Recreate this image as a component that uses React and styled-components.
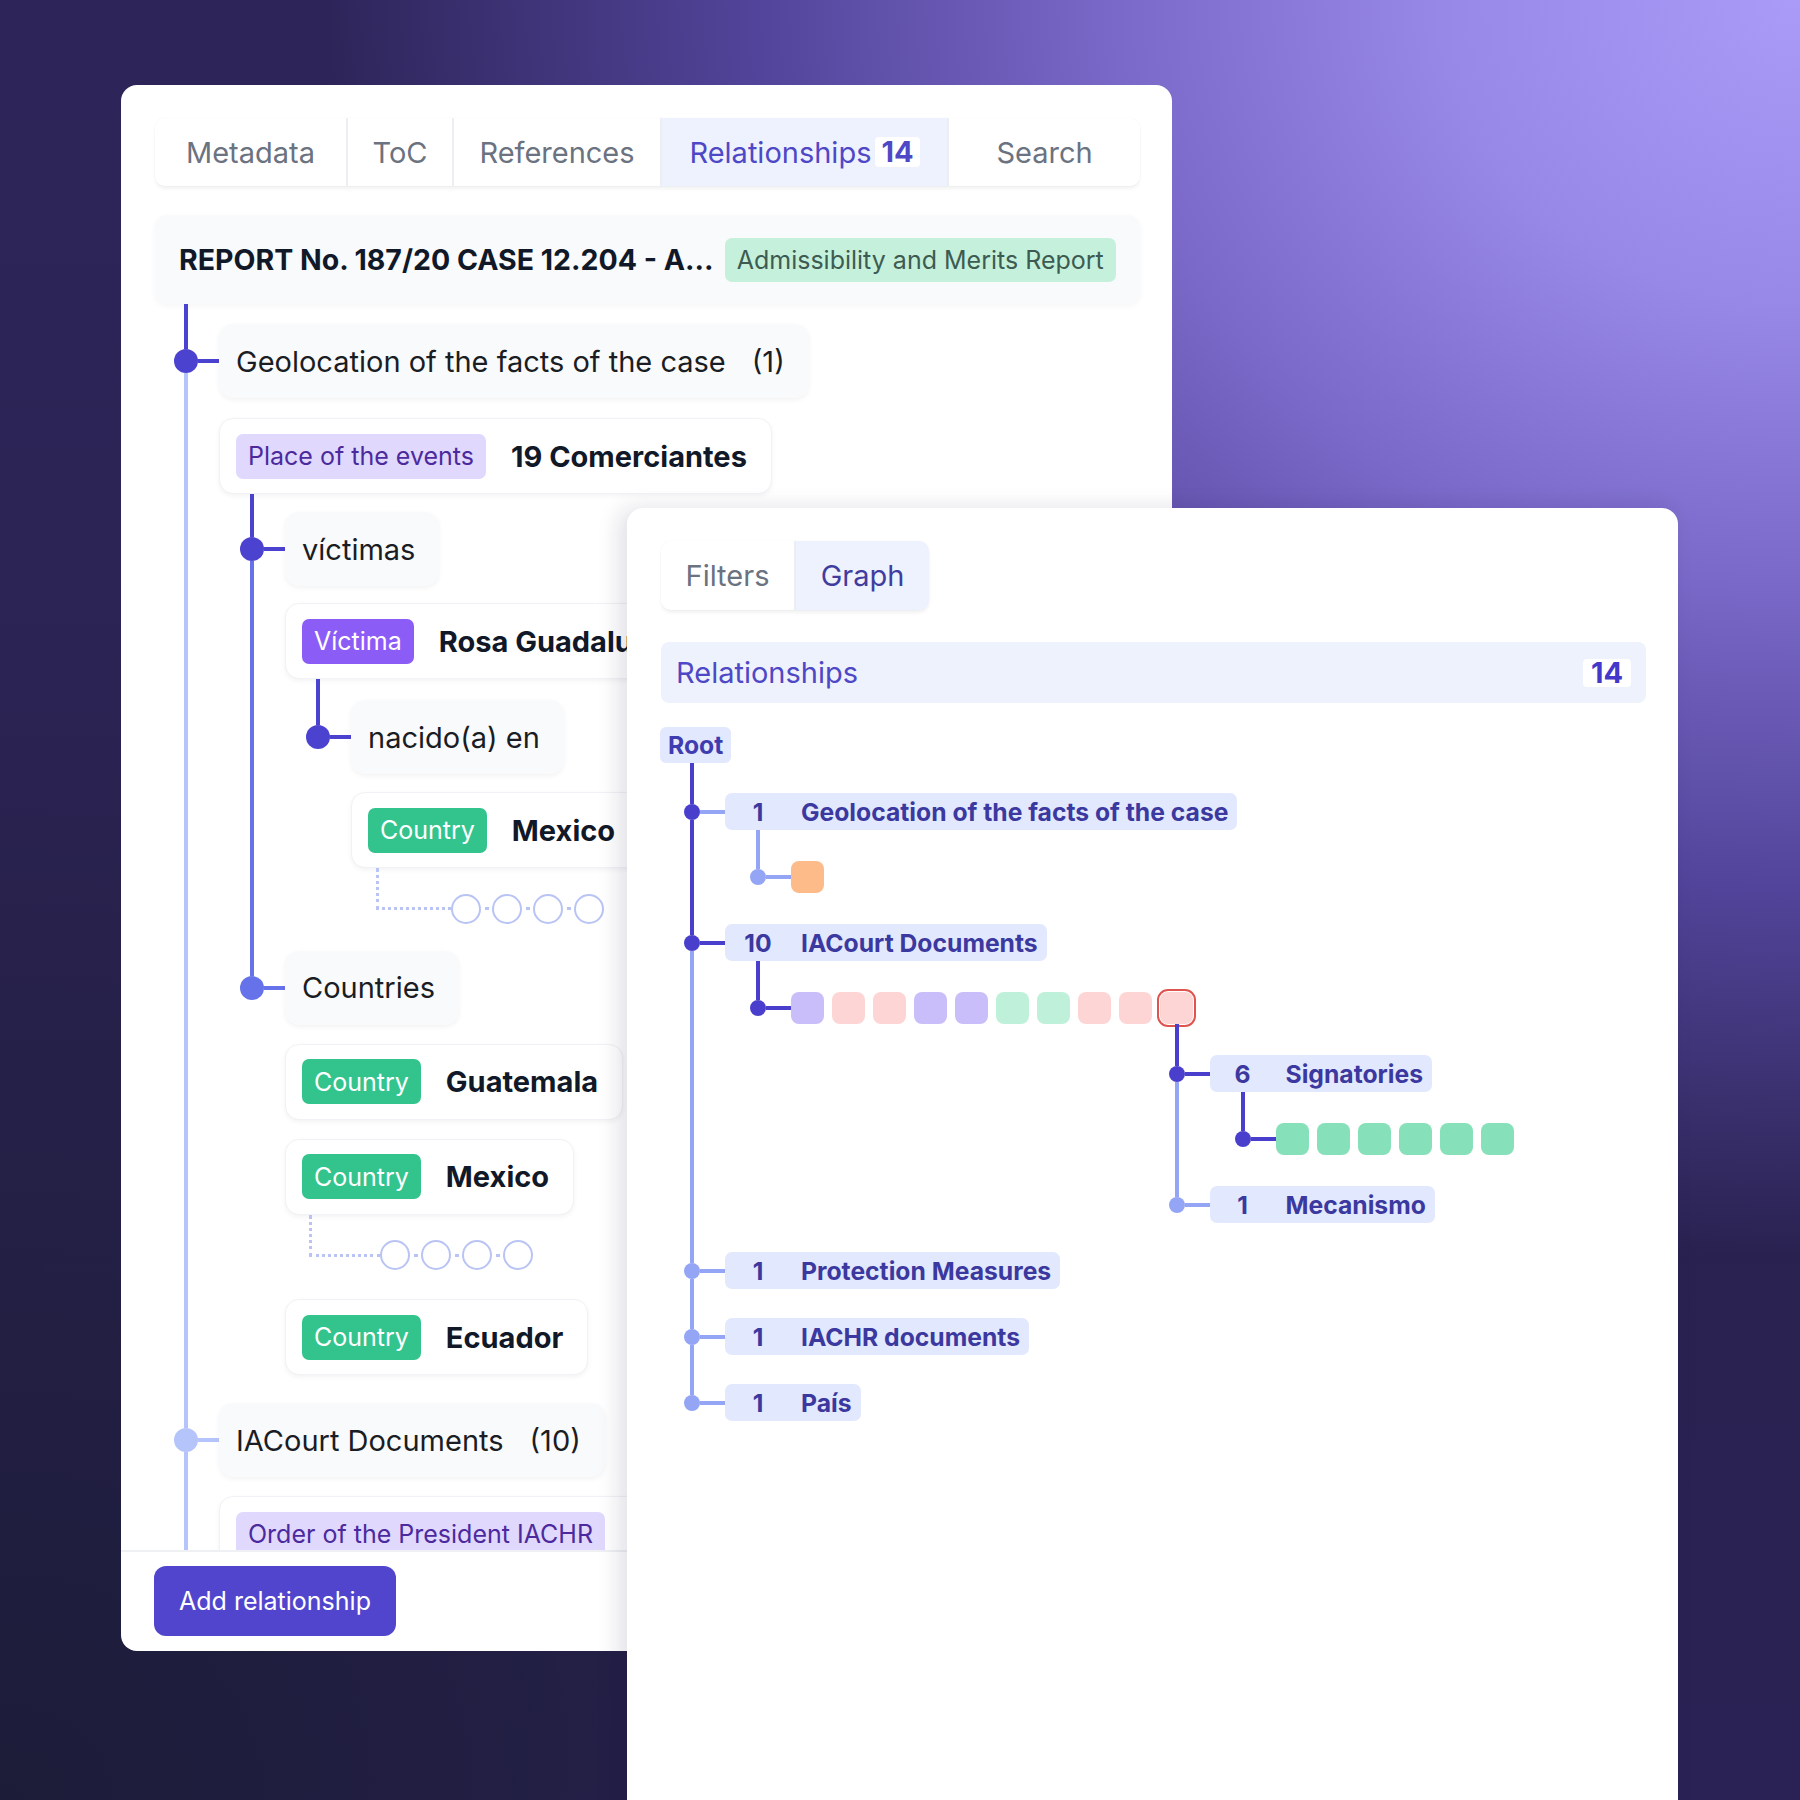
import React from 'react';
import styled, { createGlobalStyle } from 'styled-components';

const GlobalStyle = createGlobalStyle`
  html, body { margin: 0; padding: 0; }
  body {
    font-family: Inter, "Noto Sans", "Liberation Sans", sans-serif;
    -webkit-font-smoothing: antialiased;
  }
  * { box-sizing: border-box; }
`;

const COL = {
  dark: '#4c42d0',
  mid: '#6672ea',
  light: '#b5c5fb',
  gDark: '#4a3fcc',
  gLight: '#93a5f4',
  ring: '#b9c4f4',
};

const Stage = styled.div`
  position: relative;
  width: 1800px;
  height: 1800px;
  overflow: hidden;
  padding: 85px 0 0 121px;
  background:
    radial-gradient(ellipse 100% 85% at 100% 0%, #aa9bf8 0%, #9787e7 20%, #7a69c8 38%, #52449a 58%, rgba(44, 36, 88, 0) 82%),
    radial-gradient(ellipse 70% 60% at 0% 100%, #1c1c38 0%, rgba(28, 28, 56, 0) 100%),
    linear-gradient(180deg, #2d2559 0%, #29224f 60%, #2a2254 100%);
`;

const Panel = styled.section`
  width: 1051px;
  height: 1566px;
  background: #ffffff;
  border-radius: 16px;
  padding: 33px 32px 0 34px;
  display: flex;
  flex-direction: column;
  overflow: hidden;
`;

const FloatPanel = styled(Panel)`
  position: absolute;
  left: 627px;
  top: 508px;
  height: 1340px;
  box-shadow: -8px 0 22px rgba(20, 16, 60, 0.13);
`;

const TabBar = styled.div`
  display: flex;
  align-self: flex-start;
  flex: none;
  height: ${p => p.$h}px;
  background: #fff;
  border-radius: 10px;
  overflow: hidden;
  box-shadow: 0 3px 4px -1px rgba(17, 24, 39, 0.08), 0 0 1px rgba(17, 24, 39, 0.1);
`;

const Tab = styled.div`
  width: ${p => p.$w}px;
  display: flex;
  align-items: center;
  justify-content: center;
  gap: 4px;
  font-size: 29px;
  color: ${p => (p.$active ? p.$activeColor || '#4f48c6' : '#6b7280')};
  background: ${p => (p.$active ? '#eef2fe' : '#fff')};
  & + & {
    border-left: 2px solid #eceef2;
  }
`;

const TabCount = styled.span`
  font-weight: 700;
  background: #fff;
  border-radius: 4px;
  padding: 0 6px;
  line-height: 30px;
  color: #4f48c6;
`;

const DocHeader = styled.div`
  margin-top: 29px;
  height: 89px;
  flex: none;
  display: flex;
  align-items: center;
  gap: 11px;
  padding: 0 24px;
  background: #f8fafc;
  border-radius: 12px;
  box-shadow: 0 2px 6px rgba(17, 24, 39, 0.04);
`;

const DocTitle = styled.span`
  font-size: 28.5px;
  font-weight: 700;
  color: #111827;
  white-space: nowrap;
`;

const Badge = styled.span`
  display: inline-flex;
  align-items: center;
  flex: none;
  height: ${p => p.$h || 45}px;
  padding: 0 12px;
  border-radius: 7px;
  font-size: 25px;
  white-space: nowrap;
  background: ${p => p.$bg};
  color: ${p => p.$fg};
`;

const TreeArea = styled.div`
  flex: 1;
  min-height: 0;
  overflow: hidden;
`;

const Footer = styled.div`
  flex: none;
  height: 101px;
  margin: 0 -32px 0 -34px;
  padding: 14px 0 0 33px;
  border-top: 2px solid #eef0f3;
`;

const PrimaryButton = styled.button`
  height: 70px;
  width: 242px;
  border: 0;
  border-radius: 12px;
  background: #5145cd;
  color: #fff;
  font-family: Inter, "Noto Sans", sans-serif;
  font-size: 25px;
  font-weight: 400;
`;

/* ---------- generic branch / rail ---------- */

const Group = styled.div`
  display: flex;
  flex-direction: column;
`;

const ItemGrid = styled.div`
  display: grid;
  grid-template-columns: ${p => p.$col}px max-content;
`;

const RailCol = styled.div`
  display: flex;
  flex-direction: column;
`;

const Seg = styled.div`
  flex: ${p => (p.$grow ? '1' : 'none')};
  width: ${p => p.$w}px;
  height: ${p => (p.$h != null ? `${p.$h}px` : 'auto')};
  margin-left: ${p => p.$x - p.$w / 2}px;
  background: ${p => p.$c};
`;

const DotRow = styled.div`
  flex: none;
  display: flex;
  align-items: center;
  height: ${p => p.$d}px;
`;

const Dot = styled.span`
  flex: none;
  width: ${p => p.$d}px;
  height: ${p => p.$d}px;
  border-radius: 50%;
  margin-left: ${p => p.$x - p.$d / 2}px;
  background: ${p => p.$c};
`;

const Conn = styled.span`
  flex: 1;
  height: ${p => p.$w}px;
  background: ${p => p.$c};
`;

const Body = styled.div`
  padding-top: ${p => p.$pt}px;
  display: flex;
  flex-direction: column;
  align-items: flex-start;
`;

function Branch({ rail, padTop, labelH, c, label, children }) {
  const topH = padTop + labelH / 2 - rail.dot / 2;
  return (
    <ItemGrid $col={rail.col}>
      <RailCol>
        <Seg $x={rail.x} $w={rail.lw} $h={topH} $c={c.top} />
        <DotRow $d={rail.dot}>
          <Dot $x={rail.x} $d={rail.dot} $c={c.dot} />
          <Conn $w={rail.lw} $c={c.conn} />
        </DotRow>
        {c.bottom && <Seg $x={rail.x} $w={rail.lw} $grow $c={c.bottom} />}
      </RailCol>
      <Body $pt={padTop}>
        {label}
        {children}
      </Body>
    </ItemGrid>
  );
}

const L0 = { x: 31, col: 64, dot: 24, lw: 4 };
const L1 = { x: 33, col: 66, dot: 24, lw: 4 };
const G0 = { x: 31, col: 64, dot: 16, lw: 4 };
const G1 = { x: 33, col: 66, dot: 16, lw: 4 };

const all = (col, bottom) => ({ top: col, dot: col, conn: col, bottom });

/* ---------- left tree parts ---------- */

const RelCard = styled.div`
  display: inline-flex;
  align-items: center;
  gap: 26px;
  height: 74px;
  padding: 0 24px 0 17px;
  background: #f9fafb;
  border-radius: 14px;
  box-shadow: 0 2px 5px rgba(17, 24, 39, 0.05);
  font-size: 29px;
  color: #1a1d23;
  white-space: nowrap;
`;

const EntityCard = styled.div`
  display: inline-flex;
  align-items: center;
  gap: 25px;
  height: 76px;
  margin-top: ${p => p.$mt}px;
  padding: 0 24px 0 16px;
  background: #fff;
  border: 1px solid #f1f2f5;
  border-radius: 14px;
  box-shadow: 0 2px 5px rgba(17, 24, 39, 0.05);
  white-space: nowrap;
`;

const EntityName = styled.span`
  font-size: 29px;
  font-weight: 700;
  color: #111827;
`;

const Chain = styled.div`
  display: flex;
  align-items: flex-end;
  margin-left: ${p => p.$ml}px;
`;

const Elbow = styled.div`
  width: ${p => p.$w}px;
  height: 42px;
  margin-bottom: 13.5px;
  border-left: 3px dotted ${COL.ring};
  border-bottom: 3px dotted ${COL.ring};
`;

const RingRow = styled.div`
  display: flex;
  align-items: center;
  height: 30px;
`;

const Ring = styled.span`
  flex: none;
  width: 30px;
  height: 30px;
  border-radius: 50%;
  border: 2.5px solid ${COL.ring};
`;

const RingLink = styled.span`
  flex: none;
  width: 4px;
  height: 3px;
  margin: 0 3.5px;
  background: ${COL.ring};
`;

function RingChain({ ml, w }) {
  return (
    <Chain $ml={ml}>
      <Elbow $w={w} />
      <RingRow>
        <Ring />
        <RingLink />
        <Ring />
        <RingLink />
        <Ring />
        <RingLink />
        <Ring />
      </RingRow>
    </Chain>
  );
}

const countryBadge = { $bg: '#33c48d', $fg: '#ffffff' };
const placeBadge = { $bg: '#e0d9fd', $fg: '#4c2a9e' };

function Country({ name, mt }) {
  return (
    <EntityCard $mt={mt}>
      <Badge {...countryBadge}>Country</Badge>
      <EntityName>{name}</EntityName>
    </EntityCard>
  );
}

/* ---------- graph parts ---------- */

const RelBar = styled.div`
  margin-top: 32px;
  height: 61px;
  flex: none;
  display: flex;
  align-items: center;
  justify-content: space-between;
  padding: 0 15px;
  background: #eef2fd;
  border-radius: 8px;
  font-size: 29px;
  color: #4f48c6;
`;

const RelBarCount = styled.span`
  font-weight: 700;
  background: #fff;
  border-radius: 4px;
  padding: 0 8px;
  line-height: 28px;
  color: #4338ca;
`;

const GraphTree = styled.div`
  margin-top: 24px;
  display: flex;
  flex-direction: column;
  align-items: flex-start;
`;

const RootTag = styled.span`
  display: inline-flex;
  align-items: center;
  height: 36px;
  padding: 0 8px;
  margin-left: -1px;
  background: #e2e8fd;
  border-radius: 6px;
  font-size: 24.7px;
  font-weight: 700;
  color: #3f3bb0;
`;

const GLabel = styled.div`
  display: inline-flex;
  align-items: center;
  height: 37px;
  padding-right: 9px;
  border-radius: 7px;
  background: #e2e8fd;
  color: #3b389f;
  font-size: 24.7px;
  font-weight: 700;
  white-space: nowrap;
`;

const GNum = styled.span`
  width: 66px;
  margin-right: 10px;
  text-align: center;
`;

const Squares = styled.div`
  display: flex;
  align-items: flex-start;
  gap: 8px;
`;

const Sq = styled.span`
  flex: none;
  width: 33px;
  height: 32px;
  border-radius: 8px;
  background: ${p => p.$c};
  ${p => p.$sel && 'outline: 2px solid #e0544f; outline-offset: 1px;'}
`;

const SqStack = styled.div`
  display: flex;
  flex-direction: column;
  align-items: flex-start;
`;

const Hanging = styled.div`
  width: max-content;
  margin-left: -14.5px;
`;

const SQ = {
  orange: '#fdbb8a',
  lav: '#c9befa',
  pink: '#fdd5d5',
  mint: '#bff0da',
  green: '#86e0b9',
};

function GItem({ n, text }) {
  return (
    <GLabel>
      <GNum>{n}</GNum>
      {text}
    </GLabel>
  );
}

export default function App() {
  const docSquares = [SQ.lav, SQ.pink, SQ.pink, SQ.lav, SQ.lav, SQ.mint, SQ.mint, SQ.pink, SQ.pink];
  return (
    <>
      <GlobalStyle />
      <Stage>
        <Panel>
          <TabBar $h={68}>
            <Tab $w={191}>Metadata</Tab>
            <Tab $w={106}>ToC</Tab>
            <Tab $w={208}>References</Tab>
            <Tab $w={287} $active>
              Relationships<TabCount>14</TabCount>
            </Tab>
            <Tab $w={193}>Search</Tab>
          </TabBar>

          <DocHeader>
            <DocTitle>REPORT No. 187/20 CASE 12.204 - A…</DocTitle>
            <Badge $h={44} $bg="#c5f1dc" $fg="#3e5b51">
              Admissibility and Merits Report
            </Badge>
          </DocHeader>

          <TreeArea>
            <Group>
              <Branch
                rail={L0}
                padTop={20}
                labelH={74}
                c={{ top: COL.dark, dot: COL.dark, conn: COL.dark, bottom: COL.light }}
                label={
                  <RelCard>
                    Geolocation of the facts of the case<span>(1)</span>
                  </RelCard>
                }
              >
                <EntityCard $mt={20}>
                  <Badge {...placeBadge}>Place of the events</Badge>
                  <EntityName>19 Comerciantes</EntityName>
                </EntityCard>
                <Group>
                  <Branch
                    rail={L1}
                    padTop={18}
                    labelH={74}
                    c={{ top: COL.dark, dot: COL.dark, conn: COL.dark, bottom: COL.mid }}
                    label={<RelCard>víctimas</RelCard>}
                  >
                    <EntityCard $mt={17}>
                      <Badge $bg="#8b5cf6" $fg="#ffffff">Víctima</Badge>
                      <EntityName>Rosa Guadalupe Hernández</EntityName>
                    </EntityCard>
                    <Group>
                      <Branch
                        rail={L1}
                        padTop={21}
                        labelH={74}
                        c={all(COL.dark)}
                        label={<RelCard>nacido(a) en</RelCard>}
                      >
                        <Country name="Mexico" mt={18} />
                        <RingChain ml={25} w={75} />
                      </Branch>
                    </Group>
                  </Branch>
                  <Branch
                    rail={L1}
                    padTop={27}
                    labelH={74}
                    c={all(COL.mid)}
                    label={<RelCard>Countries</RelCard>}
                  >
                    <Country name="Guatemala" mt={19} />
                    <Country name="Mexico" mt={19} />
                    <RingChain ml={24} w={71} />
                    <Country name="Ecuador" mt={29} />
                  </Branch>
                </Group>
              </Branch>
              <Branch
                rail={L0}
                padTop={28}
                labelH={74}
                c={all(COL.light, COL.light)}
                label={
                  <RelCard>
                    IACourt Documents<span>(10)</span>
                  </RelCard>
                }
              >
                <EntityCard $mt={19}>
                  <Badge {...placeBadge}>Order of the President IACHR</Badge>
                  <EntityName>Medidas Provisionales</EntityName>
                </EntityCard>
                <EntityCard $mt={20}>
                  <Badge {...placeBadge}>Judgment</Badge>
                  <EntityName>19 Comerciantes vs. Colombia</EntityName>
                </EntityCard>
              </Branch>
            </Group>
          </TreeArea>

          <Footer>
            <PrimaryButton>Add relationship</PrimaryButton>
          </Footer>
        </Panel>

        <FloatPanel>
          <TabBar $h={69}>
            <Tab $w={133}>Filters</Tab>
            <Tab $w={135} $active $activeColor="#403d9e">
              Graph
            </Tab>
          </TabBar>

          <RelBar>
            <span>Relationships</span>
            <RelBarCount>14</RelBarCount>
          </RelBar>

          <GraphTree>
            <RootTag>Root</RootTag>
            <Group>
              <Branch
                rail={G0}
                padTop={30}
                labelH={37}
                c={{ top: COL.gDark, dot: COL.gDark, conn: COL.gLight, bottom: COL.gDark }}
                label={<GItem n="1" text="Geolocation of the facts of the case" />}
              >
                <Group>
                  <Branch
                    rail={G1}
                    padTop={31}
                    labelH={32}
                    c={all(COL.gLight)}
                    label={
                      <Squares>
                        <Sq $c={SQ.orange} />
                      </Squares>
                    }
                  />
                </Group>
              </Branch>

              <Branch
                rail={G0}
                padTop={31}
                labelH={37}
                c={{ top: COL.gDark, dot: COL.gDark, conn: COL.gDark, bottom: COL.gLight }}
                label={<GItem n="10" text="IACourt Documents" />}
              >
                <Group>
                  <Branch
                    rail={G1}
                    padTop={31}
                    labelH={32}
                    c={all(COL.gDark)}
                    label={
                      <Squares>
                        {docSquares.map((c, i) => (
                          <Sq key={i} $c={c} />
                        ))}
                        <SqStack>
                          <Sq $c={SQ.pink} $sel />
                          <Hanging>
                            <Group>
                              <Branch
                                rail={G0}
                                padTop={31}
                                labelH={37}
                                c={{ top: COL.gDark, dot: COL.gDark, conn: COL.gDark, bottom: COL.gLight }}
                                label={<GItem n="6" text="Signatories" />}
                              >
                                <Group>
                                  <Branch
                                    rail={G1}
                                    padTop={31}
                                    labelH={32}
                                    c={all(COL.gDark)}
                                    label={
                                      <Squares>
                                        {[0, 1, 2, 3, 4, 5].map(i => (
                                          <Sq key={i} $c={SQ.green} />
                                        ))}
                                      </Squares>
                                    }
                                  />
                                </Group>
                              </Branch>
                              <Branch
                                rail={G0}
                                padTop={31}
                                labelH={37}
                                c={all(COL.gLight)}
                                label={<GItem n="1" text="Mecanismo" />}
                              />
                            </Group>
                          </Hanging>
                        </SqStack>
                      </Squares>
                    }
                  />
                </Group>
              </Branch>

              <Branch
                rail={G0}
                padTop={29}
                labelH={37}
                c={all(COL.gLight, COL.gLight)}
                label={<GItem n="1" text="Protection Measures" />}
              />
              <Branch
                rail={G0}
                padTop={29}
                labelH={37}
                c={all(COL.gLight, COL.gLight)}
                label={<GItem n="1" text="IACHR documents" />}
              />
              <Branch
                rail={G0}
                padTop={29}
                labelH={37}
                c={all(COL.gLight)}
                label={<GItem n="1" text="País" />}
              />
            </Group>
          </GraphTree>
        </FloatPanel>
      </Stage>
    </>
  );
}
